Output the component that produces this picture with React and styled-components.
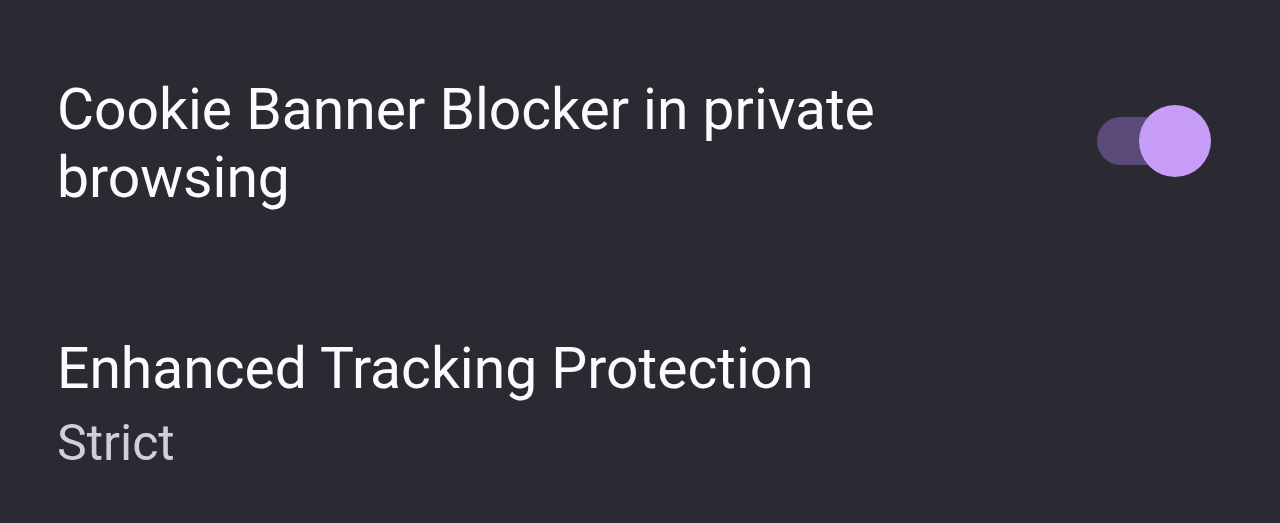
import React, { useState } from "react";
import styled, { createGlobalStyle } from "styled-components";

const GlobalStyle = createGlobalStyle`
    html, body {
        margin: 0;
        padding: 0;
        background: #2b2a33;
    }
    body {
        font-family: Roboto, "Noto Sans", sans-serif;
        -webkit-font-smoothing: antialiased;
    }
`;

const Page = styled.div`
    width: 1280px;
    height: 523px;
    box-sizing: border-box;
    background: #2b2a33;
    padding: 76px 69px 0 57px;
    display: flex;
    flex-direction: column;
    overflow: hidden;
`;

const Row = styled.div`
    display: flex;
    justify-content: space-between;
    align-items: flex-start;
    margin-top: ${(p) => p.$gap || 0}px;
`;

const TextBlock = styled.div`
    display: flex;
    flex-direction: column;
    max-width: ${(p) => p.$maxWidth || 1000}px;
`;

const Title = styled.div`
    font-size: 57px;
    line-height: 68px;
    color: #fbfbfe;
    font-weight: 400;
`;

const Subtitle = styled.div`
    font-size: 50px;
    line-height: 60px;
    color: #cfcfd8;
    margin-top: 10px;
`;

const Switch = styled.button`
    position: relative;
    width: 114px;
    height: 72px;
    margin-top: 29px;
    padding: 0;
    border: none;
    background: transparent;
    cursor: pointer;
    display: flex;
    align-items: center;
    flex-shrink: 0;
`;

const Track = styled.span`
    display: block;
    width: 100px;
    height: 48px;
    border-radius: 24px;
    background: ${(p) => (p.$on ? "#5b4b78" : "#5b5b66")};
`;

const Thumb = styled.span`
    position: absolute;
    top: 0;
    ${(p) => (p.$on ? "right: 0;" : "left: 0;")}
    width: 72px;
    height: 72px;
    border-radius: 50%;
    background: ${(p) => (p.$on ? "#c89df7" : "#e0e0e6")};
`;

export default function App() {
    const [cookieBlocker, setCookieBlocker] = useState(true);

    return (
        <>
            <GlobalStyle />
            <Page>
                <Row>
                    <TextBlock $maxWidth={880}>
                        <Title>Cookie Banner Blocker in private browsing</Title>
                    </TextBlock>
                    <Switch
                        role="switch"
                        aria-checked={cookieBlocker}
                        onClick={() => setCookieBlocker((v) => !v)}
                    >
                        <Track $on={cookieBlocker} />
                        <Thumb $on={cookieBlocker} />
                    </Switch>
                </Row>
                <Row $gap={123}>
                    <TextBlock>
                        <Title>Enhanced Tracking Protection</Title>
                        <Subtitle>Strict</Subtitle>
                    </TextBlock>
                </Row>
            </Page>
        </>
    );
}
